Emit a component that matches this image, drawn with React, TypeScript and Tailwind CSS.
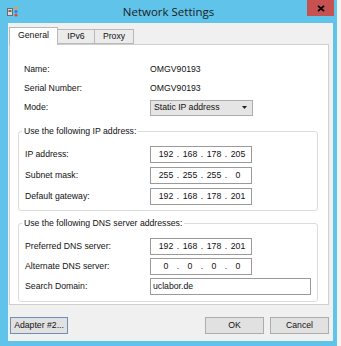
import React from "react";

const font = { fontFamily: '"Liberation Sans", Arial, sans-serif' };

function IpBox({ parts }: { parts: string[] }) {
  return (
    <div className="flex h-[17px] w-[102px] items-center border border-[#9a9a9a] bg-white pl-[5px] leading-none">
      {parts.map((p, i) => (
        <React.Fragment key={i}>
          {i > 0 && <span className="w-[4px] text-center">.</span>}
          <span className="w-[20px] text-center">{p}</span>
        </React.Fragment>
      ))}
    </div>
  );
}

function Row({ label, children }: { label: string; children: React.ReactNode }) {
  return (
    <div className="flex items-center">
      <div className="w-[125px]">{label}</div>
      {children}
    </div>
  );
}

function Group({ title, children, gap }: { title: string; children: React.ReactNode; gap: string }) {
  return (
    <div className="ml-[8px] w-[300px] rounded-[3px] border border-[#dcdcdc]">
      <div className="-mt-[7px] ml-[3px] w-fit bg-white px-[2px] leading-[12px]">{title}</div>
      <div className={`mt-[9px] flex flex-col pl-[6px] ${gap}`}>{children}</div>
    </div>
  );
}

export default function App() {
  return (
    <div className="h-[346px] w-[341px] overflow-hidden bg-[#f4f4f4]" style={font}>
      <div className="flex h-[346px] w-[337px] flex-col bg-[#5fc3ea]">
        {/* title bar */}
        <div className="relative flex h-[23px] items-center">
          <svg className="ml-[7px]" width="12" height="11" viewBox="0 0 12 11">
            <rect x="0.5" y="2.5" width="5" height="7" fill="#d8d8d8" stroke="#6b6b6b" />
            <rect x="1.5" y="4" width="3" height="2" fill="#6b6b6b" />
            <circle cx="9" cy="2" r="1.6" fill="#f29b2c" />
            <circle cx="9" cy="5.5" r="1.6" fill="#3a7fd5" />
            <circle cx="9" cy="9" r="1.6" fill="#e2463a" />
          </svg>
          <div
            className="flex-1 pr-[19px] text-center text-[11.5px] text-[#1c1c1c]"
            style={{ fontFamily: '"Open Sans", "Noto Sans", sans-serif' }}
          >
            Network Settings
          </div>
          <div className="absolute right-[3px] top-0 flex h-[16px] w-[27px] items-center justify-center bg-[#c75050]">
            <svg width="8" height="7" viewBox="0 0 8 7">
              <path d="M1 0.8 L7 6.2 M7 0.8 L1 6.2" stroke="#000" strokeWidth="1.8" />
            </svg>
          </div>
        </div>

        {/* body */}
        <div className="ml-[8px] flex h-[318px] w-[325px] flex-col bg-[#f0f0f0] text-[8.7px] text-[#111]">
          {/* tabs */}
          <div className="mt-[4px] flex h-[17px] items-end pl-[1px]">
            <div className="z-10 -mb-px flex h-[18px] w-[49px] items-center justify-center border border-b-0 border-[#b9b9b9] bg-white pb-[1px]">
              General
            </div>
            <div className="flex h-[15px] w-[37px] items-center justify-center border border-l-0 border-[#b9b9b9] bg-[#ebebeb]">
              IPv6
            </div>
            <div className="flex h-[15px] w-[39px] items-center justify-center border border-l-0 border-[#b9b9b9] bg-[#ebebeb]">
              Proxy
            </div>
          </div>

          {/* panel */}
          <div className="ml-[1px] h-[261px] w-[320px] border border-[#cfcfcf] bg-white">
            <div className="flex flex-col pl-[14px] pt-[15px]">
              <div className="flex h-[19px] items-center">
                <div className="w-[126px]">Name:</div>
                <div>OMGV90193</div>
              </div>
              <div className="flex h-[19px] items-center">
                <div className="w-[126px]">Serial Number:</div>
                <div>OMGV90193</div>
              </div>
              <div className="flex h-[19px] items-center">
                <div className="w-[126px]">Mode:</div>
                <div className="flex h-[16px] w-[103px] items-center justify-between border border-[#acacac] bg-[#e5e5e5] pl-[3px] pr-[5px]">
                  <span>Static IP address</span>
                  <svg width="5" height="3" viewBox="0 0 5 3">
                    <path d="M0 0 H5 L2.5 3 Z" fill="#222" />
                  </svg>
                </div>
              </div>
            </div>

            <div className="mt-[14px]">
              <Group title="Use the following IP address:" gap="gap-[4px] pb-[5px]">
                <Row label="IP address:">
                  <IpBox parts={["192", "168", "178", "205"]} />
                </Row>
                <Row label="Subnet mask:">
                  <IpBox parts={["255", "255", "255", "0"]} />
                </Row>
                <Row label="Default gateway:">
                  <IpBox parts={["192", "168", "178", "201"]} />
                </Row>
              </Group>
            </div>

            <div className="mt-[12px]">
              <Group title="Use the following DNS server addresses:" gap="gap-[3px] pb-[6px]">
                <Row label="Preferred DNS server:">
                  <IpBox parts={["192", "168", "178", "201"]} />
                </Row>
                <Row label="Alternate DNS server:">
                  <IpBox parts={["0", "0", "0", "0"]} />
                </Row>
                <Row label="Search Domain:">
                  <div className="flex h-[17px] w-[161px] items-center border border-[#9a9a9a] bg-white pl-[2px]">
                    uclabor.de
                  </div>
                </Row>
              </Group>
            </div>
          </div>

          {/* buttons */}
          <div className="mt-[12px] flex items-center pl-[2px]">
            <div className="flex h-[17px] w-[58px] items-center justify-center border border-[#6f8fb8] bg-[#e1e1e1]">
              Adapter #2...
            </div>
            <div className="ml-auto flex h-[17px] w-[59px] items-center justify-center border border-[#adadad] bg-[#e1e1e1]">
              OK
            </div>
            <div className="ml-[6px] mr-[4px] flex h-[17px] w-[59px] items-center justify-center border border-[#adadad] bg-[#e1e1e1]">
              Cancel
            </div>
          </div>
        </div>
      </div>
    </div>
  );
}
